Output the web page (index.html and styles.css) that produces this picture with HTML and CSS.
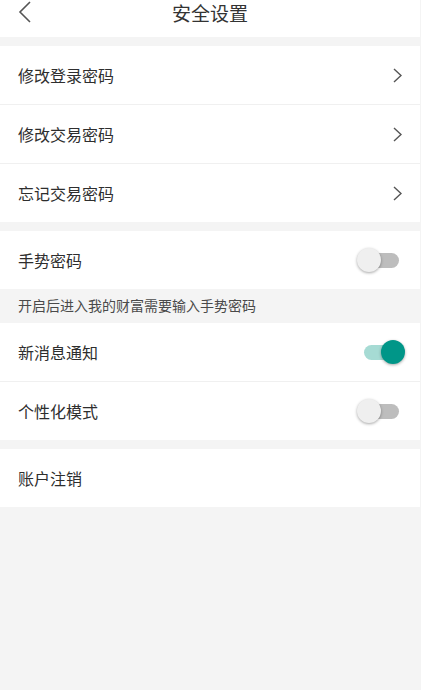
FILE: index.html
```html
<!DOCTYPE html>
<html lang="zh-CN">
<head>
    <meta charset="UTF-8">
    <meta name="viewport" content="width=device-width, initial-scale=1.0">
    <title>安全设置</title>
    <link rel="stylesheet" href="styles.css">
</head>
<body>
    <div class="page">
        <div class="header">
            <span class="back">
                <svg width="14" height="22" viewBox="0 0 14 22"><path d="M12 1 L2 11 L12 21" fill="none" stroke="#555" stroke-width="1.6"/></svg>
            </span>
            <h1>安全设置</h1>
        </div>

        <div class="group">
            <div class="row">
                <span>修改登录密码</span>
                <svg class="arrow" width="9" height="15" viewBox="0 0 9 15"><path d="M1 1 L8 7.5 L1 14" fill="none" stroke="#555" stroke-width="1.4"/></svg>
            </div>
            <div class="row">
                <span>修改交易密码</span>
                <svg class="arrow" width="9" height="15" viewBox="0 0 9 15"><path d="M1 1 L8 7.5 L1 14" fill="none" stroke="#555" stroke-width="1.4"/></svg>
            </div>
            <div class="row">
                <span>忘记交易密码</span>
                <svg class="arrow" width="9" height="15" viewBox="0 0 9 15"><path d="M1 1 L8 7.5 L1 14" fill="none" stroke="#555" stroke-width="1.4"/></svg>
            </div>
        </div>

        <div class="group">
            <div class="row">
                <span>手势密码</span>
                <div class="switch"><div class="track"></div><div class="knob"></div></div>
            </div>
        </div>
        <div class="note">开启后进入我的财富需要输入手势密码</div>
        <div class="group no-gap">
            <div class="row">
                <span>新消息通知</span>
                <div class="switch on"><div class="track"></div><div class="knob"></div></div>
            </div>
            <div class="row">
                <span>个性化模式</span>
                <div class="switch"><div class="track"></div><div class="knob"></div></div>
            </div>
        </div>

        <div class="group">
            <div class="row">
                <span>账户注销</span>
            </div>
        </div>
    </div>
</body>
</html>
```

FILE: styles.css
```css
body {
    margin: 0;
    background: #f4f4f4;
    font-family: "Noto Sans CJK SC", "Noto Sans", sans-serif;
    color: #333;
}

.page {
    width: 420px;
    min-height: 690px;
    background: #f4f4f4;
}

.header {
    position: relative;
    height: 37px;
    background: #fff;
    text-align: center;
}

.header h1 {
    margin: 0;
    font-size: 19px;
    font-weight: normal;
    line-height: 25px;
    color: #333;
}

.back {
    position: absolute;
    left: 18px;
    top: 1px;
}

.group {
    margin-top: 9px;
    background: #fff;
}

.group.no-gap {
    margin-top: 0;
}

.row {
    height: 58px;
    padding: 0 18px;
    display: flex;
    align-items: center;
    justify-content: space-between;
    font-size: 16px;
    color: #2e2e2e;
}

.row + .row {
    border-top: 1px solid #f0f0f0;
}

.note {
    height: 34px;
    line-height: 32px;
    padding-left: 18px;
    font-size: 14px;
    color: #4a4a4a;
}

.switch {
    position: relative;
    width: 48px;
    height: 24px;
    margin-right: -3px;
}

.track {
    position: absolute;
    left: 7px;
    top: 5px;
    width: 35px;
    height: 15px;
    border-radius: 8px;
    background: #bdbdbd;
}

.knob {
    position: absolute;
    left: 0;
    top: 0;
    width: 24px;
    height: 24px;
    border-radius: 50%;
    background: #efefef;
    box-shadow: 0 1px 3px rgba(0, 0, 0, 0.35);
}

.switch.on .track {
    background: #a6dbd4;
}

.switch.on .knob {
    left: 24px;
    background: #009688;
}
```
